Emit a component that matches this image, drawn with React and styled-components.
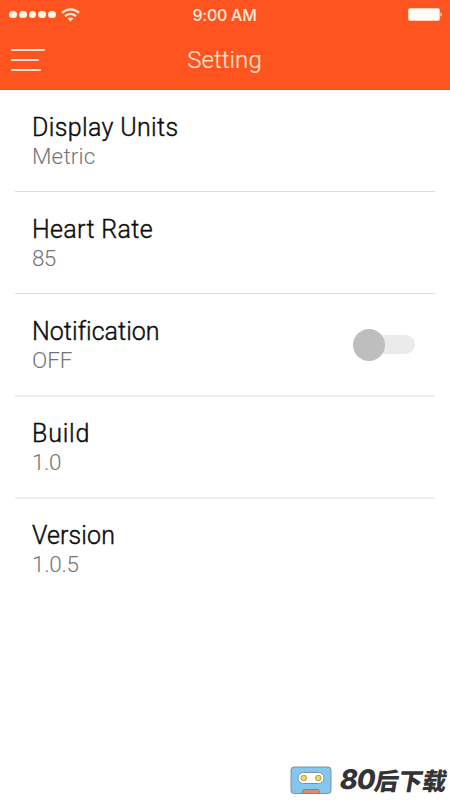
import React from "react";
import styled, { createGlobalStyle } from "styled-components";

const GlobalStyle = createGlobalStyle`
  * {
    box-sizing: border-box;
  }

  body {
    margin: 0;
    background: #fff;
    font-family: Roboto, "Liberation Sans", sans-serif;
  }
`;

const Screen = styled.div`
  display: flex;
  flex-direction: column;
  width: 450px;
  height: 800px;
`;

const Header = styled.header`
  height: 90px;
  background: #ff541f;
  border-bottom: 1px solid #e5562d;
`;

const StatusBar = styled.div`
  display: grid;
  grid-template-columns: 1fr auto 1fr;
  align-items: center;
  height: 29px;
  padding: 0 8px 0 9px;
`;

const Signal = styled.div`
  display: flex;
  align-items: center;
  gap: 2px;

  svg {
    margin-left: 3px;
  }
`;

const Dot = styled.span`
  width: 7.8px;
  height: 7.8px;
  border-radius: 50%;
  background: #fff5e6;
`;

const Time = styled.span`
  margin-right: 2px;
  color: #ffead8;
  font-family: Inter, "Liberation Sans", sans-serif;
  font-size: 16px;
  font-weight: 500;
  letter-spacing: -0.25px;
`;

const Battery = styled.svg`
  justify-self: end;
`;

const NavBar = styled.div`
  display: grid;
  grid-template-columns: 1fr auto 1fr;
  align-items: center;
  height: 60px;
  padding: 0 12px 0 11px;
`;

const MenuButton = styled.button`
  display: flex;
  flex-direction: column;
  gap: 8px;
  padding: 1px 0 0;
  border: 0;
  background: none;
`;

const MenuLine = styled.span`
  width: ${(props) => props.$width}px;
  height: 2px;
  border-radius: 1px;
  background: #ffe3d0;
`;

const Title = styled.h1`
  margin: 0;
  padding-top: 2px;
  color: #ffe3cd;
  font-size: 24px;
  font-weight: 300;
  line-height: 30px;
  letter-spacing: 0.1px;
  -webkit-text-stroke: 0.2px;
`;

const List = styled.ul`
  flex: 1;
  margin: 0;
  padding: 0 15px;
  list-style: none;
`;

const Row = styled.li`
  display: flex;
  align-items: center;
  justify-content: space-between;
  height: 102px;
  padding: 0 20px 0 17px;
  border-bottom: 1px solid ${(props) => (props.$soft ? "#ececec" : "#dedede")};
  box-shadow: ${(props) => (props.$soft ? "0 1px #f0f0f0" : "none")};

  &:last-child {
    border-bottom-color: transparent;
  }
`;

const Label = styled.div`
  padding-top: 1px;
  color: #0c0c0c;
  font-size: 25px;
  font-weight: 300;
  line-height: 30px;
  letter-spacing: ${(props) => props.$tracking}px;
  -webkit-text-stroke: 0.4px;
`;

const Value = styled.div`
  color: #747474;
  font-size: 22.5px;
  font-weight: 300;
  line-height: 27px;
  letter-spacing: ${(props) => props.$tracking}px;
`;

const Switch = styled.div`
  display: flex;
  align-items: center;
  width: 62px;
  height: 19px;
  border-radius: 10px;
  background: #ebebeb;
`;

const Knob = styled.span`
  flex: none;
  width: 32px;
  height: 32px;
  border-radius: 50%;
  background: #bebebe;
`;

const Footer = styled.footer`
  display: flex;
  justify-content: flex-end;
  align-items: center;
  gap: 8px;
  height: 40px;
`;

const Brand = styled.span`
  display: flex;
  align-items: center;
  color: #333436;
  font-family: "Noto Sans CJK SC", sans-serif;
  font-size: 24px;
  font-weight: 900;
  line-height: 36px;
  white-space: nowrap;
  padding-right: 3px;
  transform: skewX(-10deg);
`;

const BrandNumber = styled.span`
  font-family: Inter, "Liberation Sans", sans-serif;
  font-size: 27px;
  font-weight: 800;
  letter-spacing: -0.8px;
`;

const settings = [
  { label: "Display Units", value: "Metric", tracking: [0.35, 0.15] },
  { label: "Heart Rate", value: "85", tracking: [0.35, -0.8] },
  { label: "Notification", value: "OFF", tracking: [0.05, -0.1], toggle: true, soft: true },
  { label: "Build", value: "1.0", tracking: [0.8, -0.4], soft: true },
  { label: "Version", value: "1.0.5", tracking: [0.1, -0.3] },
];

function WifiIcon() {
  return (
    <svg width="19" height="14" viewBox="0 0 19 14" fill="none">
      <path d="M1 4.8C5.8.2 13.2.2 18 4.8" stroke="#ffe9d5" strokeWidth="2.4" />
      <path d="M4 8.2c3.3-3 7.7-3 11 0" stroke="#ffe9d5" strokeWidth="2.3" />
      <path d="M6.6 10.6c1.7-1.4 4.1-1.4 5.8 0L9.5 13.6z" fill="#ffe9d5" />
    </svg>
  );
}

function CassetteIcon() {
  return (
    <svg width="42" height="29" viewBox="0 0 42 29">
      <rect x="1" y="1" width="40" height="26.5" rx="3" fill="#83c7ef" stroke="#7d929f" />
      <rect x="8" y="6.5" width="26" height="11" rx="5.5" fill="#fff" stroke="#7893a3" />
      <circle cx="13.7" cy="12" r="2.8" fill="#f4d757" stroke="#a89b5f" />
      <circle cx="28.3" cy="12" r="2.8" fill="#f4d757" stroke="#a89b5f" />
      <path d="M13.5 23.5h15l1.5 4H12z" fill="#d98c70" stroke="#8b817d" />
      <g fill="#dff3fc" stroke="#7893a3" strokeWidth=".5">
        <circle cx="4" cy="4" r="1" />
        <circle cx="38" cy="4" r="1" />
        <circle cx="4" cy="24" r="1" />
        <circle cx="38" cy="24" r="1" />
      </g>
    </svg>
  );
}

function App() {
  return (
    <Screen>
      <GlobalStyle />
      <Header>
        <StatusBar>
          <Signal>
            {[1, 2, 3, 4, 5].map((n) => (
              <Dot key={n} />
            ))}
            <WifiIcon />
          </Signal>
          <Time>9:00 AM</Time>
          <Battery width="34" height="13" viewBox="0 0 34 13">
            <rect x=".5" y=".5" width="31" height="12" rx="1.5" fill="#fffdf8" stroke="#ffd2b8" />
            <path d="M32.5 4.5c1.7.8 1.7 3.2 0 4z" fill="#fff0e0" />
          </Battery>
        </StatusBar>
        <NavBar>
          <MenuButton aria-label="Menu">
            <MenuLine $width={34} />
            <MenuLine $width={28} />
            <MenuLine $width={30} />
          </MenuButton>
          <Title>Setting</Title>
        </NavBar>
      </Header>
      <List>
        {settings.map((item) => (
          <Row key={item.label} $soft={item.soft}>
            <div>
              <Label $tracking={item.tracking[0]}>{item.label}</Label>
              <Value $tracking={item.tracking[1]}>{item.value}</Value>
            </div>
            {item.toggle && (
              <Switch role="switch" aria-checked="false">
                <Knob />
              </Switch>
            )}
          </Row>
        ))}
      </List>
      <Footer>
        <CassetteIcon />
        <Brand>
          <BrandNumber>80</BrandNumber>后下载
        </Brand>
      </Footer>
    </Screen>
  );
}

export default App;
